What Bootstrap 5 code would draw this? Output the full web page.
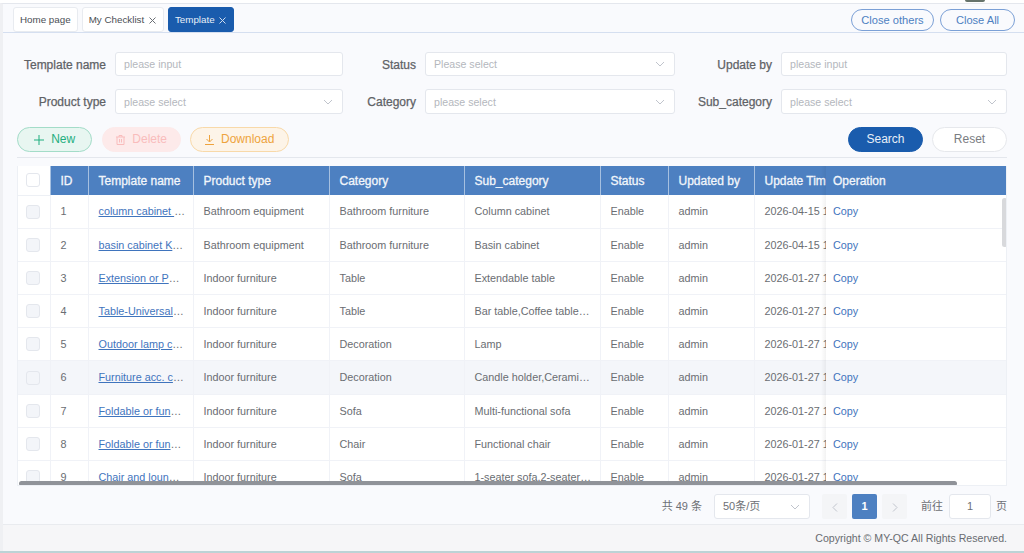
<!DOCTYPE html>
<html lang="en">
<head>
<meta charset="UTF-8">
<title>Template</title>
<link href="https://cdn.jsdelivr.net/npm/bootstrap@5.3.0/dist/css/bootstrap.min.css" rel="stylesheet">
<style>
html, body { height: 553px; overflow: hidden; }
body { background: #fff; font-family: "Liberation Sans", "Noto Sans CJK SC", sans-serif; font-size: 11px; color: #606266; }
.page-edge { position: relative; border-bottom: 2px solid #bcd3d6; height: 553px; padding-top: 3px; }
.avatar-sliver { position: absolute; left: 965px; top: 0; width: 20px; height: 2px; background: #66736b; border-radius: 0 0 8px 8px; }
.shell { height: 548px; background: #f9fafd; border-left: 3px solid #eff0f3; border-top: 1px solid #e4e7ed; display: flex; flex-direction: column; }
.tabbar { height: 29px; border-bottom: 1px solid #d5dff0; padding: 3px 9px 0 10px; flex: none; }
.tab-item { height: 25px; padding: 0 6px; background: #fff; border: 1px solid #e8ebf0; border-radius: 3px; color: #4b4f55; font-size: 9.8px; line-height: 23px; margin-right: 4px; white-space: nowrap; }
.tab-item.closable { padding-right: 7px; }
.tab-item.on { background: #1a5cad; border-color: #1a5cad; color: #e8eff8; }
.tab-item svg { margin-left: 2px; }
.ghost-btn { height: 22px; margin-top: 2px; margin-left: 6px; border: 1px solid #7ba0d6; border-radius: 11px; color: #4d80c1; font-size: 11.1px; line-height: 20px; text-align: center; }
.body-area { flex: 1; padding: 19px 17px 0 14px; }
.form-line { height: 24px; margin-bottom: 13px; }
.form-line.second { height: 25px; }
.fld-label { font-size: 12px; color: #5f6266; text-align: right; -webkit-text-stroke: 0.25px #5f6266; line-height: 26px; white-space: nowrap; }
.fld-box { background: #fff; border: 1px solid #e4e7ed; border-radius: 3px; color: #b4b7bd; font-size: 10.6px; line-height: 22px; padding: 0 9px 0 8px; margin-left: 9px; }
.form-line.second .fld-box { line-height: 24px; }
.w2 { width: 228px; } .w3 { width: 250px; } .w4 { width: 226px; }
.act-btn { height: 25px; border-radius: 12.5px; border: 1px solid; font-size: 12px; line-height: 22px; padding: 0 0 1px; text-align: center; }
.act-new { width: 75px; background: #e8f6f1; border-color: #a3dcc8; color: #1fae7f; }
.act-del { width: 79px; background: #fdeaea; border-color: #fdeaea; color: #f9bcbc; margin-left: 10px; }
.act-down { width: 99px; background: #fdf4e8; border-color: #f8d9a9; color: #eea33d; margin-left: 9px; }
.act-search { width: 75px; background: #1a5cad; border-color: #1a5cad; color: #e8eff8; }
.act-reset { width: 75px; background: #fff; border-color: #e6e8ec; color: #7a7d82; margin-left: 9px; }
.rule-line { border-top: 1px solid #e4e7ed; margin-top: 5px; height: 9px; }
.grid-wrap { position: relative; width: 990px; height: 320px; overflow: hidden; border: 1px solid #edf0f5; border-top: 0; background: #fff; }
.data-grid { table-layout: fixed; width: 988px; border-collapse: collapse; font-size: 10.8px; color: #6a6d72; }
.data-grid th { height: 29px; background: #4d80c1; color: #f2f6fb; font-size: 12px; font-weight: 400; -webkit-text-stroke: 0.3px #f2f6fb; padding: 0 0 0 10px; border-left: 1px solid #a6c0e0; white-space: nowrap; overflow: hidden; }
.data-grid th:first-child { background: #fff; border-left: 0; border-bottom: 1px solid #edf0f5; padding-left: 8px; }
.data-grid th:last-child { border-left: 0; padding-left: 7px; }
.data-grid td { height: 33.2px; padding: 0 0 0 10px; border-left: 1px solid #f0f2f7; border-bottom: 1px solid #f0f2f7; white-space: nowrap; overflow: hidden; }
.data-grid td:first-child { border-left: 0; padding: 0 0 0 8px; }
.data-grid td:last-child { border-left: 0; padding-left: 7px; }
.data-grid tr.hov td { background: #f4f6fa; }
.data-grid td:nth-child(3), .data-grid td:nth-child(6) { text-overflow: ellipsis; padding-right: 7px; }
.data-grid a { color: #3f74bd; }
.data-grid td:nth-child(3) a { text-decoration: underline; }
.data-grid td:last-child a { text-decoration: none; }
.tick { display: block; width: 14px; height: 14px; border: 1px solid #e4e7ed; border-radius: 3px; background: #f3f5f9; }
th .tick { background: #fff; }
.fixed-shade { position: absolute; top: 0; bottom: 0; left: 803px; width: 5px; background: linear-gradient(to right, rgba(0,0,0,0), rgba(0,0,0,0.05)); }
.bar-x { position: absolute; left: 1px; top: 315px; width: 938px; height: 5px; border-radius: 2.5px; background: #909399; }
.bar-y { position: absolute; left: 984px; top: 32px; width: 5px; height: 49px; border-radius: 3px; background: #d8d9dc; }
.pager { height: 38px; padding-top: 8px; font-size: 11px; color: #6d7075; }
.pager-note { line-height: 25px; }
.pager-jump-label { margin-left: 9px; }
.pg-size { width: 96px; height: 25px; background: #fff; border: 1px solid #e4e7ed; border-radius: 3px; line-height: 23px; padding: 0 9px 0 8px; margin: 0 12px; }
.pg-cell { width: 25px; height: 25px; background: #f4f5f7; border-radius: 2px; text-align: center; line-height: 24px; color: #c0c4cc; margin-right: 5px; }
.pg-cell.on { background: #4d80c1; color: #fff; font-weight: 700; }
.pg-jump { width: 42px; height: 25px; background: #fff; border: 1px solid #e4e7ed; border-radius: 3px; text-align: center; line-height: 23px; margin: 0 5px 0 6px; }
.foot-bar { flex: none; height: 27px; background: #f6f6f8; border-top: 1px solid #e9ebef; padding-right: 17px; text-align: right; font-size: 10.6px; line-height: 27px; color: #696c71; }
</style>
</head>
<body>
<div class="page-edge">
<div class="avatar-sliver"></div>
<div class="shell">
  <div class="tabbar d-flex">
    <div class="tab-item">Home page</div>
    <div class="tab-item closable">My Checklist <svg width="7" height="7" viewBox="0 0 7 7"><path d="M.5.5l6 6M6.5.5l-6 6" stroke="#6b6f75" fill="none"/></svg></div>
    <div class="tab-item closable on">Template <svg width="7" height="7" viewBox="0 0 7 7"><path d="M.5.5l6 6M6.5.5l-6 6" stroke="#cfdcee" fill="none"/></svg></div>
    <div class="ghost-btn ms-auto" style="width:83px">Close others</div>
    <div class="ghost-btn" style="width:75px">Close All</div>
  </div>
  <div class="body-area">
    <div class="form-line d-flex">
      <div class="fld-label" style="width:89px">Template name</div>
      <div class="fld-box w2">please input</div>
      <div class="fld-label" style="width:73px">Status</div>
      <div class="fld-box w3 d-flex justify-content-between"><span>Please select</span><svg width="10" height="22" viewBox="0 0 10 22"><path d="M1 9l4 4 4-4" stroke="#c0c4cc" fill="none"/></svg></div>
      <div class="fld-label" style="width:97px">Update by</div>
      <div class="fld-box w4">please input</div>
    </div>
    <div class="form-line second d-flex">
      <div class="fld-label" style="width:89px">Product type</div>
      <div class="fld-box w2 d-flex justify-content-between"><span>please select</span><svg width="10" height="23" viewBox="0 0 10 23"><path d="M1 10l4 4 4-4" stroke="#c0c4cc" fill="none"/></svg></div>
      <div class="fld-label" style="width:73px">Category</div>
      <div class="fld-box w3 d-flex justify-content-between"><span>please select</span><svg width="10" height="23" viewBox="0 0 10 23"><path d="M1 10l4 4 4-4" stroke="#c0c4cc" fill="none"/></svg></div>
      <div class="fld-label" style="width:97px">Sub_category</div>
      <div class="fld-box w4 d-flex justify-content-between"><span>please select</span><svg width="10" height="23" viewBox="0 0 10 23"><path d="M1 10l4 4 4-4" stroke="#c0c4cc" fill="none"/></svg></div>
    </div>
    <div class="d-flex">
      <button class="act-btn act-new"><svg width="10" height="10" viewBox="0 0 10 10" class="me-1"><path d="M5 0v10M0 5h10" stroke="#1fae7f" fill="none"/></svg> New</button>
      <button class="act-btn act-del"><svg width="9" height="10" viewBox="0 0 9 10" class="me-1"><path d="M0 2h9M3 2V.5h3V2M1 2v7.5h7V2M3.5 4v3.5M5.5 4v3.5" stroke="#f9bcbc" fill="none"/></svg> Delete</button>
      <button class="act-btn act-down"><svg width="9" height="10" viewBox="0 0 9 10" class="me-1"><path d="M4.5 0v6.5M1.5 4l3 3 3-3M0 9.5h9" stroke="#eea33d" fill="none"/></svg> Download</button>
      <button class="act-btn act-search ms-auto">Search</button>
      <button class="act-btn act-reset">Reset</button>
    </div>
    <div class="rule-line"></div>
    <div class="grid-wrap">
      <table class="data-grid">
        <colgroup>
          <col style="width:32px"><col style="width:38px"><col style="width:105px"><col style="width:136px"><col style="width:135px"><col style="width:136px"><col style="width:68px"><col style="width:86px"><col style="width:72px"><col style="width:180px">
        </colgroup>
        <thead><tr>
          <th><span class="tick"></span></th><th>ID</th><th>Template name</th><th>Product type</th><th>Category</th><th>Sub_category</th><th>Status</th><th>Updated by</th><th>Update Time</th><th>Operation</th>
        </tr></thead>
        <tbody id="rows"></tbody>
      </table>
      <div class="fixed-shade"></div>
      <div class="bar-x"></div>
      <div class="bar-y"></div>
    </div>
    <div class="pager d-flex justify-content-end">
      <span class="pager-note">共 49 条</span>
      <div class="pg-size d-flex justify-content-between"><span>50条/页</span><svg width="10" height="23" viewBox="0 0 10 23"><path d="M1 10l4 4 4-4" stroke="#c0c4cc" fill="none"/></svg></div>
      <div class="pg-cell"><svg width="6" height="9" viewBox="0 0 6 9"><path d="M5 .5l-4 4 4 4" stroke="#c0c4cc" fill="none"/></svg></div>
      <div class="pg-cell on">1</div>
      <div class="pg-cell"><svg width="6" height="9" viewBox="0 0 6 9"><path d="M1 .5l4 4-4 4" stroke="#c0c4cc" fill="none"/></svg></div>
      <span class="pager-note pager-jump-label">前往</span>
      <div class="pg-jump">1</div>
      <span class="pager-note">页</span>
    </div>
  </div>
  <div class="foot-bar">Copyright © MY-QC All Rights Reserved.</div>
</div>
</div>
<script>
const rows = [
  ['column cabinet KD set', 'Bathroom equipment', 'Bathroom furniture', 'Column cabinet', '2026-04-15 10:21'],
  ['basin cabinet KD set', 'Bathroom equipment', 'Bathroom furniture', 'Basin cabinet', '2026-04-15 10:21'],
  ['Extension or Pop-up table', 'Indoor furniture', 'Table', 'Extendable table', '2026-01-27 11:02'],
  ['Table-Universal check', 'Indoor furniture', 'Table', 'Bar table,Coffee table,Dining table', '2026-01-27 11:02'],
  ['Outdoor lamp check list', 'Indoor furniture', 'Decoration', 'Lamp', '2026-01-27 11:02'],
  ['Furniture acc. check list', 'Indoor furniture', 'Decoration', 'Candle holder,Ceramic vase', '2026-01-27 11:02'],
  ['Foldable or functional', 'Indoor furniture', 'Sofa', 'Multi-functional sofa', '2026-01-27 11:02'],
  ['Foldable or functional', 'Indoor furniture', 'Chair', 'Functional chair', '2026-01-27 11:02'],
  ['Chair and lounge set', 'Indoor furniture', 'Sofa', '1-seater sofa,2-seater sofa,3-seater', '2026-01-27 11:02']
];
document.getElementById('rows').innerHTML = rows.map((r, i) => `
  <tr class="${i === 5 ? 'hov' : ''}">
    <td><span class="tick"></span></td><td>${i + 1}</td><td><a href="#">${r[0]}</a></td><td>${r[1]}</td><td>${r[2]}</td><td>${r[3]}</td>
    <td>Enable</td><td>admin</td><td>${r[4]}</td><td><a href="#">Copy</a></td>
  </tr>`).join('');
</script>
<script src="https://cdn.jsdelivr.net/npm/bootstrap@5.3.0/dist/js/bootstrap.bundle.min.js"></script>
</body>
</html>
